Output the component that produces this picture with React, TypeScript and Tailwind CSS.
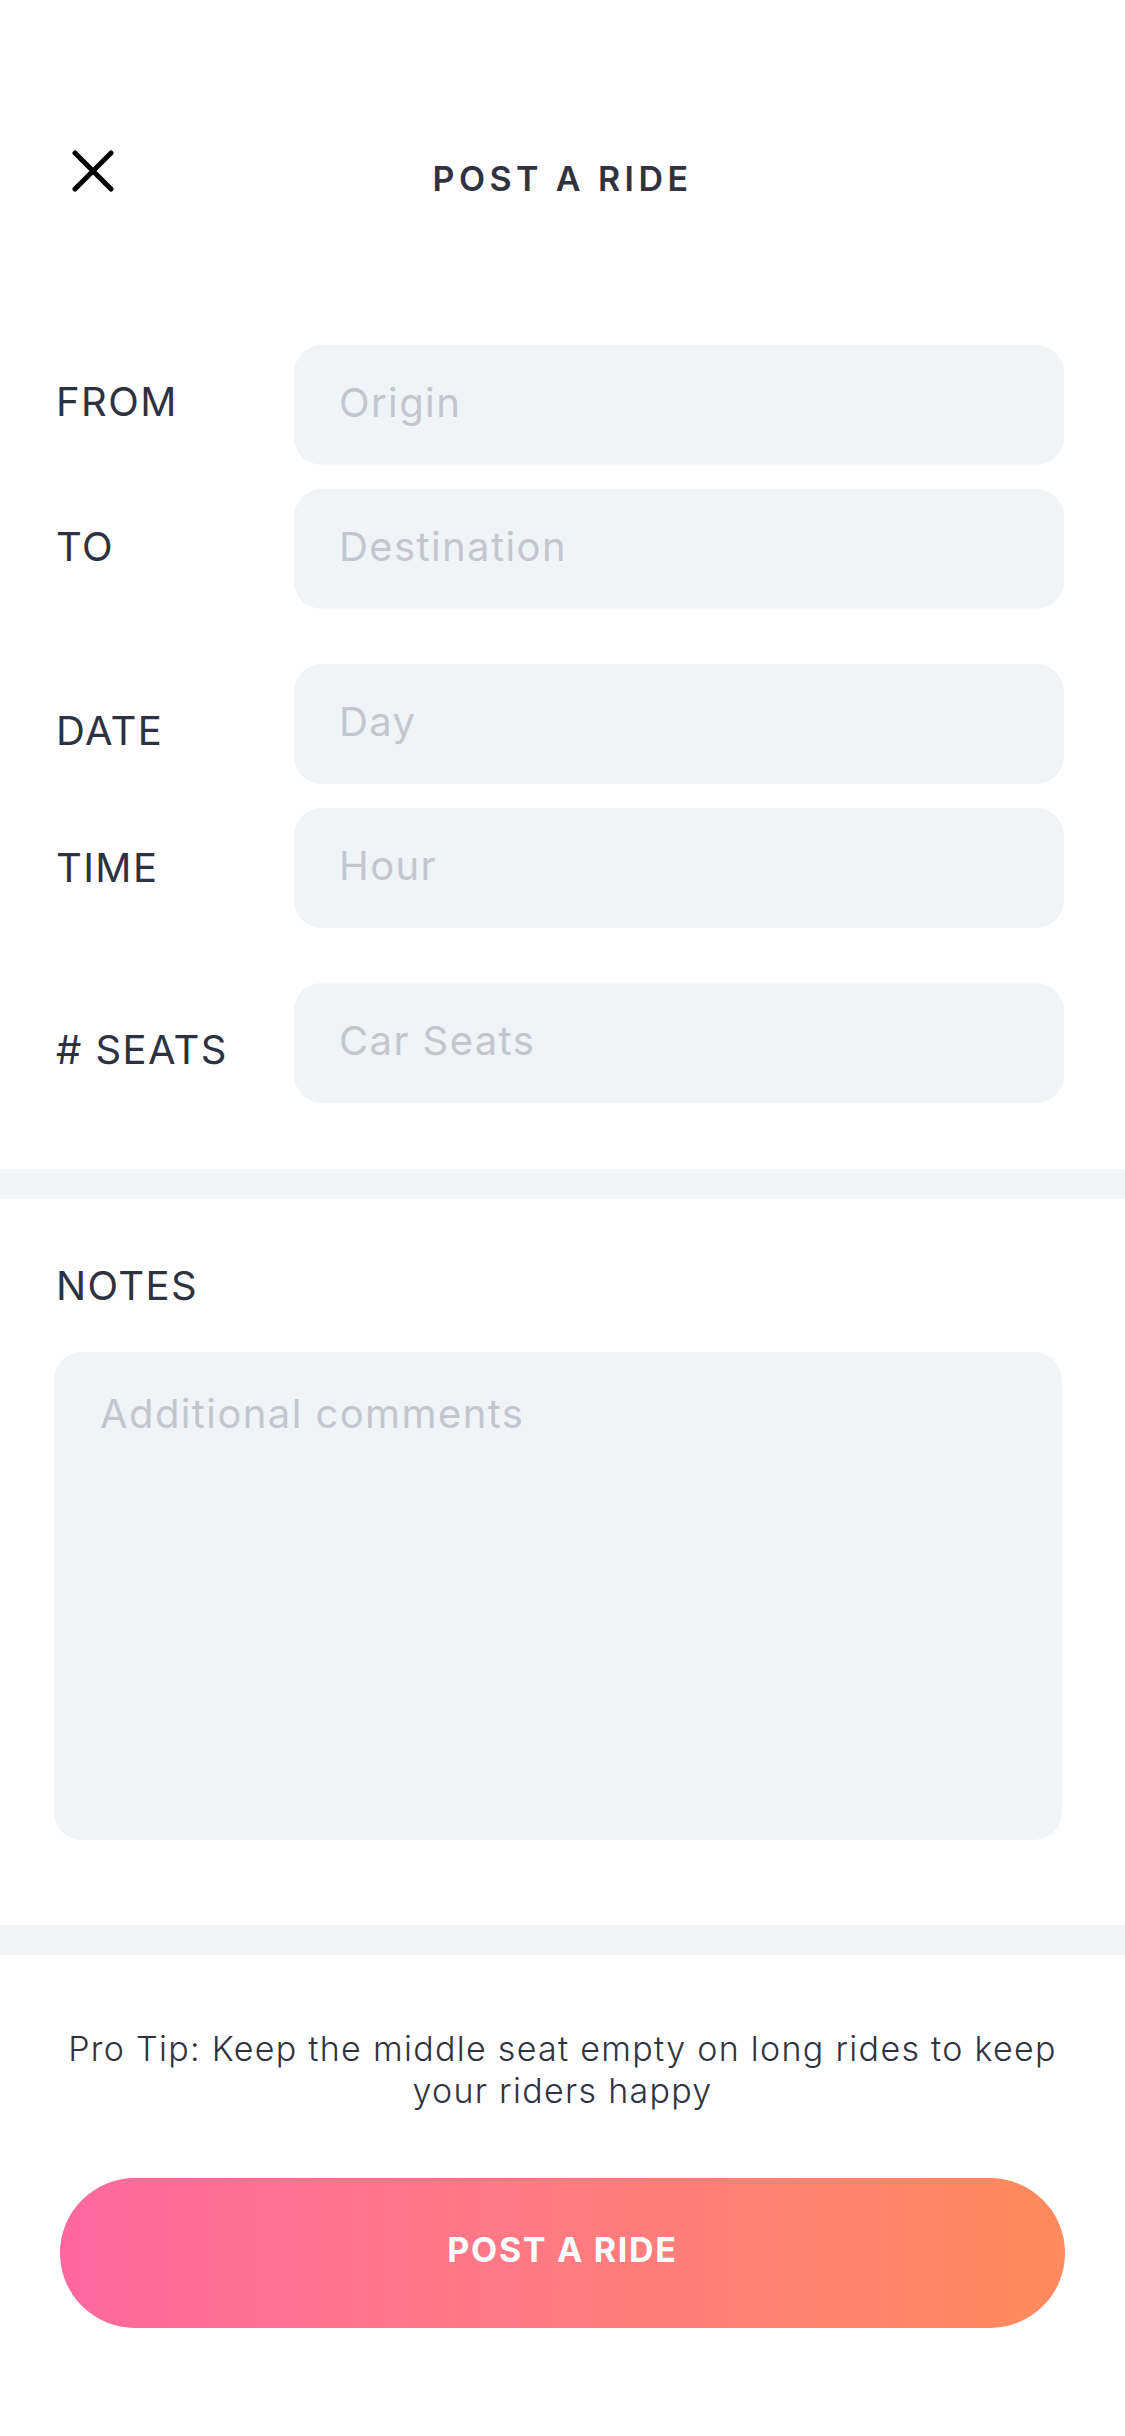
import type { ReactNode } from 'react';

const font = { fontFamily: 'Inter, "Noto Sans", "Liberation Sans", sans-serif' };

interface FieldRowProps {
  label: string;
  placeholder: string;
  // nudges the label so it sits where the screenshot puts it
  labelClass?: string;
}

function CloseIcon() {
  return (
    <svg width="42" height="42" viewBox="0 0 42 42" fill="none" aria-hidden="true">
      <path d="M3 3 L39 39 M39 3 L3 39" stroke="#000" strokeWidth="5" strokeLinecap="round" />
    </svg>
  );
}

function FieldRow({ label, placeholder, labelClass = '' }: FieldRowProps) {
  return (
    <div className="flex items-center">
      <label
        className={`w-[238px] shrink-0 text-[40px] leading-[48px] tracking-[1.4px] text-[#2e3140] ${labelClass}`}
      >
        {label}
      </label>
      <input
        type="text"
        placeholder={placeholder}
        className="h-[120px] flex-1 rounded-[28px] bg-[#f1f4f7] px-[45px] pb-[6px] text-[40px] tracking-[1.4px] text-[#2e3140] outline-none placeholder:text-[#c4c6cd]"
        style={font}
      />
    </div>
  );
}

function Group({ children }: { children: ReactNode }) {
  return <div className="flex flex-col gap-[24px]">{children}</div>;
}

export default function App() {
  return (
    <div className="min-h-screen w-full bg-white" style={font}>
      {/* header */}
      <header className="grid grid-cols-[1fr_auto_1fr] items-start px-[72px] pt-[150px]">
        <button type="button" className="justify-self-start">
          <CloseIcon />
        </button>
        <h1 className="mt-[8px] text-[34px] font-semibold leading-[42px] tracking-[0.13em] text-[#30333f]">
          POST A RIDE
        </h1>
        <div />
      </header>

      {/* ride details */}
      <section className="flex flex-col gap-[55px] pl-[56px] pr-[61px] pt-[145px] pb-[66px]">
        <Group>
          <FieldRow label="FROM" placeholder="Origin" labelClass="pb-[6px]" />
          <FieldRow label="TO" placeholder="Destination" labelClass="pb-[5px]" />
        </Group>
        <Group>
          <FieldRow label="DATE" placeholder="Day" labelClass="pt-[13px]" />
          <FieldRow label="TIME" placeholder="Hour" />
        </Group>
        <FieldRow label="# SEATS" placeholder="Car Seats" labelClass="pt-[13px]" />
      </section>

      <div className="h-[30px] bg-[#f4f5f7]" />

      {/* notes */}
      <section className="pl-[56px] pr-[61px] pt-[63px] pb-[85px]">
        <p className="text-[40px] leading-[48px] tracking-[1.4px] text-[#2e3140]">NOTES</p>
        <textarea
          placeholder="Additional comments"
          className="mt-[42px] block h-[488px] w-full -ml-[2px] resize-none rounded-[28px] bg-[#f1f4f7] px-[46px] pt-[38px] text-[40px] leading-[48px] tracking-[1.4px] text-[#2e3140] outline-none placeholder:text-[#c4c6cd]"
          style={font}
        />
      </section>

      <div className="h-[30px] bg-[#f4f5f7]" />

      {/* footer */}
      <section className="flex flex-col items-center px-[60px] pt-[73px] pb-[108px]">
        <p className="text-center text-[34px] font-light leading-[42px] tracking-[1.3px] text-[#30333f]">
          Pro Tip: Keep the middle seat empty on long rides to keep your riders happy
        </p>
        <button
          type="button"
          className="mt-[66px] flex h-[150px] w-full items-center justify-center rounded-full bg-gradient-to-r from-[#ff689f] to-[#ff8a5c] pb-[8px] text-[34px] font-bold tracking-[0.05em] text-white"
          style={font}
        >
          POST A RIDE
        </button>
      </section>
    </div>
  );
}
